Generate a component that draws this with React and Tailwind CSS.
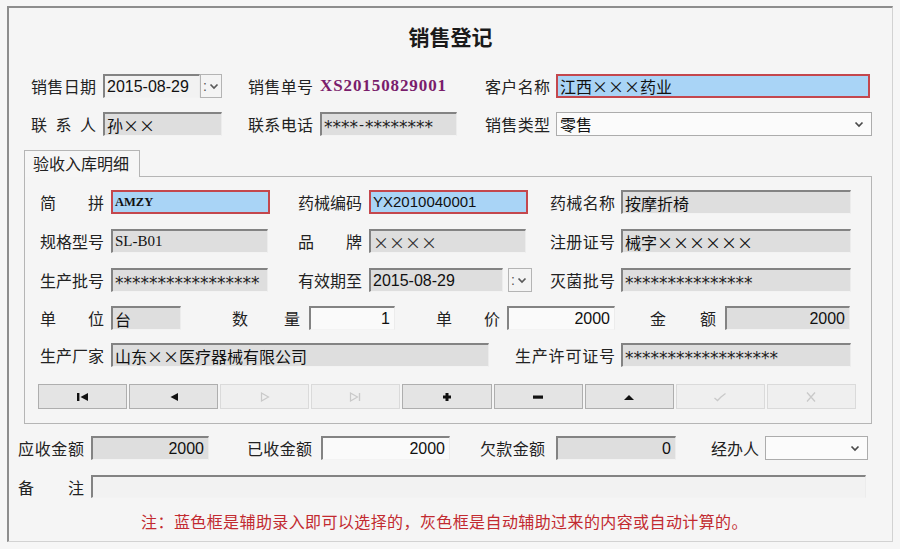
import React from "react";

const CJK = "font-['Noto_Sans_CJK_SC',sans-serif]";
const SANS = "font-['Liberation_Sans','Noto_Sans_CJK_SC',sans-serif]";
const SERIF = "font-['Liberation_Serif','Noto_Sans_CJK_SC',serif]";
const STAR = "font-['DejaVu_Sans',sans-serif]";

const TONES = {
  gray: "bg-[#dedede] border-t-2 border-l-2 border-t-[#838383] border-l-[#838383] border-b border-r border-b-[#f3f3f3] border-r-[#ececec]",
  white: "bg-[#fafafa] border-t-2 border-l-2 border-t-[#838383] border-l-[#838383] border-b border-r border-b-[#f3f3f3] border-r-[#ececec]",
  light: "bg-[#f2f2f2] border-t-2 border-l-2 border-t-[#838383] border-l-[#838383] border-b border-r border-b-[#f3f3f3] border-r-[#ececec]",
  blue: "bg-[#a9d4f6] border-2 border-[#c4474d]",
};

function Label({ text, className = "" }) {
  const chars = text.replace(/ /g, "").split("");
  return (
    <div className={`flex shrink-0 justify-between text-[16px] leading-[24px] text-[#222] ${CJK} ${className}`}>
      {chars.map((c, i) => (
        <span key={i}>{c}</span>
      ))}
    </div>
  );
}

function Field({ tone = "gray", right = false, className = "", children }) {
  return (
    <div
      className={`flex h-full shrink-0 items-center overflow-hidden whitespace-nowrap text-[#111] ${TONES[tone]} ${
        right ? "justify-end pr-[4px]" : "pl-[2px]"
      } ${className}`}
    >
      {children}
    </div>
  );
}

function Chevron({ color = "#4a4a4a" }) {
  return (
    <svg width="10" height="7" viewBox="0 0 10 7">
      <polyline points="1.5,1.5 5,5 8.5,1.5" fill="none" stroke={color} strokeWidth="1.7" />
    </svg>
  );
}

function Select({ value, className = "" }) {
  return (
    <div
      className={`flex h-full shrink-0 items-center justify-between border border-[#acacac] bg-[#fbfbfb] pl-[3px] pr-[7px] ${className}`}
    >
      <span className={`text-[16px] text-[#111] ${CJK}`}>{value}</span>
      <Chevron />
    </div>
  );
}

function Spin({ className = "" }) {
  return (
    <div
      className={`flex h-full shrink-0 items-center gap-[2px] border border-[#b4b4b4] bg-[#f4f4f4] pl-[2px] ${className}`}
    >
      <span className={`text-[14px] leading-none text-[#555] ${SANS}`}>:</span>
      <Chevron color="#5a5a5a" />
    </div>
  );
}

function ToolBtn({ disabled = false, children }) {
  return (
    <div
      className={`flex items-center justify-center border ${
        disabled ? "border-[#dadada] bg-[#efefef]" : "border-[#aeaeae] bg-[#e4e4e4]"
      }`}
    >
      {children}
    </div>
  );
}

const FAINT = "#c9c9c9";

function Row({ className = "", children }) {
  return <div className={`flex h-[24px] items-stretch ${className}`}>{children}</div>;
}

// masked values: asterisks sit high in the font, so they are nudged down; dashes stay put
function Stars({ text }) {
  const parts = text.split("-");
  return (
    <span className={`flex items-center text-[17px] leading-none text-[#222] ${STAR}`}>
      {parts.map((p, i) => (
        <React.Fragment key={i}>
          {i > 0 && <span className="px-[1px] text-[14px]">-</span>}
          <span className="translate-y-[3px]">{p}</span>
        </React.Fragment>
      ))}
    </span>
  );
}

export default function App() {
  return (
    <div className="h-[549px] w-[900px] overflow-hidden bg-[#f6f6f6] pl-[7px] pt-[6px]">
      <div
        className={`h-[536px] w-[886px] border-t-2 border-l-2 border-r border-b border-t-[#8d8d8d] border-l-[#8d8d8d] border-r-[#d2d2d2] border-b-[#d2d2d2] bg-[#f5f5f5] ${CJK}`}
      >
        {/* heading */}
        <div className="h-[66px] pt-[14px]">
          <div className="text-center text-[21px] font-bold leading-[28px] text-[#1a1a1a]">销售登记</div>
        </div>

        {/* sale header */}
        <Row>
          <Label text="销售日期" className="ml-[22px] w-[65px]" />
          <Field tone="light" className="ml-[7px] w-[97px]">
            <span className={`text-[16px] ${SANS}`}>2015-08-29</span>
          </Field>
          <Spin className="w-[22px]" />
          <Label text="销售单号" className="ml-[26px] w-[65px]" />
          <div className="ml-[7px] flex w-[128px] shrink-0 items-center">
            <span className={`text-[17px] font-bold tracking-[0.9px] text-[#7a1d6c] ${SERIF}`}>XS20150829001</span>
          </div>
          <Label text="客户名称" className="ml-[37px] w-[65px]" />
          <Field tone="blue" className="ml-[6px] w-[314px]">
            <span className="text-[16px]">江西×××药业</span>
          </Field>
        </Row>

        <Row className="mt-[14px]">
          <Label text="联 系 人" className="ml-[22px] w-[65px]" />
          <Field className="ml-[7px] w-[119px]">
            <span className="text-[16px]">孙××</span>
          </Field>
          <Label text="联系电话" className="ml-[26px] w-[65px]" />
          <Field className="ml-[7px] w-[137px]">
            <Stars text="****-********" />
          </Field>
          <Label text="销售类型" className="ml-[28px] w-[65px]" />
          <Select value="零售" className="ml-[6px] w-[316px]" />
        </Row>

        {/* detail tab */}
        <div className="ml-[15px] mt-[14px]">
          <div className="relative z-10 -mb-px h-[27px] w-[116px] border border-b-0 border-[#b5b5b5] bg-[#f6f6f6] pl-[8px] text-[16px] leading-[25px] text-[#222]">
            验收入库明细
          </div>
          <div className="h-[248px] w-[848px] border border-[#b5b5b5] pt-[13px]">
            <Row>
              <Label text="简 拼" className="ml-[15px] w-[64px]" />
              <Field tone="blue" className="ml-[7px] w-[159px]">
                <span className={`text-[12.5px] font-bold ${SERIF}`}>AMZY</span>
              </Field>
              <Label text="药械编码" className="ml-[28px] w-[64px]" />
              <Field tone="blue" className="ml-[7px] w-[159px]">
                <span className={`text-[15px] ${SANS}`}>YX2010040001</span>
              </Field>
              <Label text="药械名称" className="ml-[22px] w-[65px]" />
              <Field className="ml-[6px] w-[230px]">
                <span className="text-[16px]">按摩折椅</span>
              </Field>
            </Row>

            <Row className="mt-[15px]">
              <Label text="规格型号" className="ml-[15px] w-[64px]" />
              <Field className="ml-[7px] w-[157px]">
                <span className={`text-[15px] ${SERIF}`}>SL-B01</span>
              </Field>
              <Label text="品 牌" className="ml-[30px] w-[64px]" />
              <Field className="ml-[7px] w-[157px]">
                <span className="text-[16px] text-[#333]">××××</span>
              </Field>
              <Label text="注册证号" className="ml-[24px] w-[65px]" />
              <Field className="ml-[6px] w-[230px]">
                <span className="text-[16px]">械字××××××</span>
              </Field>
            </Row>

            <Row className="mt-[15px]">
              <Label text="生产批号" className="ml-[15px] w-[64px]" />
              <Field className="ml-[7px] w-[157px]">
                <Stars text="*****************" />
              </Field>
              <Label text="有效期至" className="ml-[30px] w-[64px]" />
              <Field className="ml-[7px] w-[134px]">
                <span className={`text-[16px] ${SANS}`}>2015-08-29</span>
              </Field>
              <Spin className="ml-[5px] w-[24px]" />
              <Label text="灭菌批号" className="ml-[18px] w-[65px]" />
              <Field className="ml-[6px] w-[230px]">
                <Stars text="***************" />
              </Field>
            </Row>

            <Row className="mt-[14px]">
              <Label text="单 位" className="ml-[15px] w-[64px]" />
              <Field className="ml-[7px] w-[70px]">
                <span className="text-[16px]">台</span>
              </Field>
              <Label text="数 量" className="ml-[51px] w-[68px]" />
              <Field tone="white" right className="ml-[9px] w-[86px]">
                <span className={`text-[16px] ${SANS}`}>1</span>
              </Field>
              <Label text="单 价" className="ml-[41px] w-[64px]" />
              <Field tone="white" right className="ml-[7px] w-[108px]">
                <span className={`text-[16px] ${SANS}`}>2000</span>
              </Field>
              <Label text="金 额" className="ml-[35px] w-[66px]" />
              <Field right className="ml-[9px] w-[125px]">
                <span className={`text-[16px] ${SANS}`}>2000</span>
              </Field>
            </Row>

            <Row className="mt-[13px]">
              <Label text="生产厂家" className="ml-[15px] w-[64px]" />
              <Field className="ml-[7px] w-[378px]">
                <span className="text-[16px]">山东××医疗器械有限公司</span>
              </Field>
              <Label text="生产许可证号" className="ml-[26px] w-[100px]" />
              <Field className="ml-[6px] w-[230px]">
                <Stars text="******************" />
              </Field>
            </Row>

            {/* record navigation */}
            <div className="ml-[13px] mt-[17px] grid h-[25px] w-[818px] grid-cols-9 gap-[2px]">
              <ToolBtn>
                <svg width="13" height="10" viewBox="0 0 13 10">
                  <rect x="1" y="1" width="2.4" height="8" fill="#111" />
                  <polygon points="12,1 4.5,5 12,9" fill="#111" />
                </svg>
              </ToolBtn>
              <ToolBtn>
                <svg width="10" height="10" viewBox="0 0 10 10">
                  <polygon points="9,1 1.5,5 9,9" fill="#111" />
                </svg>
              </ToolBtn>
              <ToolBtn disabled>
                <svg width="10" height="10" viewBox="0 0 10 10">
                  <polygon points="1.5,1 8.5,5 1.5,9" fill="none" stroke={FAINT} strokeWidth="1.2" />
                </svg>
              </ToolBtn>
              <ToolBtn disabled>
                <svg width="13" height="10" viewBox="0 0 13 10">
                  <polygon points="1.5,1 8.5,5 1.5,9" fill="none" stroke={FAINT} strokeWidth="1.2" />
                  <line x1="10.5" y1="1" x2="10.5" y2="9" stroke={FAINT} strokeWidth="1.4" />
                </svg>
              </ToolBtn>
              <ToolBtn>
                <svg width="10" height="10" viewBox="0 0 10 10">
                  <path d="M5 1 V9 M1 5 H9" stroke="#111" strokeWidth="3" />
                </svg>
              </ToolBtn>
              <ToolBtn>
                <svg width="12" height="6" viewBox="0 0 12 6">
                  <rect x="1" y="1.5" width="10" height="3.2" fill="#111" />
                </svg>
              </ToolBtn>
              <ToolBtn>
                <svg width="12" height="8" viewBox="0 0 12 8">
                  <polygon points="1,7 6,2 11,7" fill="#111" />
                </svg>
              </ToolBtn>
              <ToolBtn disabled>
                <svg width="14" height="10" viewBox="0 0 14 10">
                  <path d="M1.5 6 L4.5 8.5 L8 5 L12.5 1.5" fill="none" stroke={FAINT} strokeWidth="1.3" />
                </svg>
              </ToolBtn>
              <ToolBtn disabled>
                <svg width="12" height="12" viewBox="0 0 12 12">
                  <path d="M2 1.5 L10 10.5 M10 1.5 L2 10.5" fill="none" stroke={FAINT} strokeWidth="1.3" />
                </svg>
              </ToolBtn>
            </div>
          </div>
        </div>

        {/* totals */}
        <Row className="mt-[12px]">
          <Label text="应收金额" className="ml-[9px] w-[66px]" />
          <Field right className="ml-[7px] w-[118px]">
            <span className={`text-[16px] ${SANS}`}>2000</span>
          </Field>
          <Label text="已收金额" className="ml-[38px] w-[65px]" />
          <Field tone="white" right className="ml-[9px] w-[129px]">
            <span className={`text-[16px] ${SANS}`}>2000</span>
          </Field>
          <Label text="欠款金额" className="ml-[30px] w-[65px]" />
          <Field right className="ml-[11px] w-[120px]">
            <span className={`text-[16px] ${SANS}`}>0</span>
          </Field>
          <Label text="经办人" className="ml-[35px] w-[47px]" />
          <Select value="" className="ml-[7px] w-[103px]" />
        </Row>

        <div className="mt-[15px] flex h-[23px] items-stretch">
          <Label text="备 注" className="ml-[9px] w-[66px]" />
          <Field tone="light" className="ml-[7px] w-[775px]" />
        </div>

        <div className="mt-[11px] flex justify-center pr-[12px]">
          <span className="text-[16px] leading-[24px] tracking-[0.4px] text-[#c22a30]">
            注：蓝色框是辅助录入即可以选择的，灰色框是自动辅助过来的内容或自动计算的。
          </span>
        </div>
      </div>
    </div>
  );
}
